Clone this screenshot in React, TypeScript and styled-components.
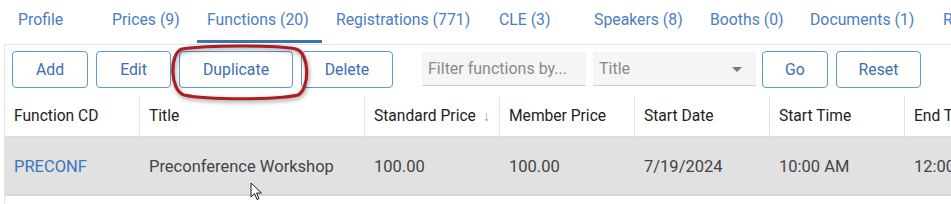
import styled, { createGlobalStyle } from 'styled-components';

const GlobalStyle = createGlobalStyle`
  html, body {
    margin: 0;
    padding: 0;
    background: #fff;
    overflow: hidden;
  }
  body {
    font-family: Roboto, 'Liberation Sans', sans-serif;
    font-size: 15.5px;
    color: #333;
  }
`;

const Page = styled.div`
  position: relative;
  width: 951px;
  height: 204px;
  overflow: hidden;
`;

const TabBar = styled.nav`
  display: flex;
  height: 44px;
  padding-left: 8px;
  box-sizing: border-box;
  white-space: nowrap;
`;

const Tab = styled.div<{ $width: number; $active?: boolean }>`
  position: relative;
  flex: 0 0 ${({ $width }) => $width}px;
  padding: 11px 0 0 10px;
  box-sizing: border-box;
  color: #4a7ec4;
  font-size: 15.8px;
  line-height: 18px;
  &::after {
    content: '';
    display: ${({ $active }) => ($active ? 'block' : 'none')};
    position: absolute;
    left: 0;
    right: 4px;
    bottom: 1px;
    height: 3px;
    background: #3a72b6;
  }
`;

const Card = styled.section`
  width: 1000px;
  margin-left: 4px;
  border-top: 1px solid #e3e3e3;
  border-left: 1px solid #e3e3e3;
  height: 200px;
`;

const Toolbar = styled.div`
  display: flex;
  align-items: flex-start;
  padding: 6px 0 0 7px;
  height: 51px;
  box-sizing: border-box;
`;

const Button = styled.button<{ $width: number; $gapAfter?: number }>`
  width: ${({ $width }) => $width}px;
  height: 37px;
  margin-right: ${({ $gapAfter }) => $gapAfter ?? 8}px;
  background: #fff;
  border: 1px solid #5a9ad8;
  border-radius: 4px;
  color: #3d6db3;
  font-family: Roboto, 'Liberation Sans', sans-serif;
  font-size: 15.8px;
  padding: 0;
`;

const FilterBox = styled.div<{ $width: number; $gapAfter: number }>`
  display: flex;
  align-items: center;
  justify-content: space-between;
  width: ${({ $width }) => $width}px;
  height: 34px;
  margin: 1px ${({ $gapAfter }) => $gapAfter}px 0 0;
  padding: 0 14px 0 6px;
  box-sizing: border-box;
  background: #f5f5f5;
  border-bottom: 1px solid #cfcfcf;
  color: #8a8a8a;
  font-size: 16px;
`;

const Caret = styled.span`
  width: 0;
  height: 0;
  border-left: 5px solid transparent;
  border-right: 5px solid transparent;
  border-top: 5px solid #7a7a7a;
  margin-top: 2px;
`;

const Grid = styled.div`
  display: grid;
  grid-template-columns: 135px 225px 135px 135px 135px 135px 135px;
`;

const HeadCell = styled.div<{ $last?: boolean }>`
  display: flex;
  align-items: center;
  justify-content: space-between;
  height: 40px;
  padding: 0 9px 0 9px;
  border-right: ${({ $last }) => ($last ? 'none' : '1px solid #e3e3e3')};
  border-bottom: 2px solid #dcdcdc;
  color: #222;
  font-size: 15.6px;
  white-space: nowrap;
  overflow: hidden;
`;

const SortArrow = styled.span`
  color: #9a9a9a;
  font-size: 14px;
`;

const Cell = styled.div<{ $link?: boolean }>`
  display: flex;
  align-items: center;
  height: 56px;
  padding: 0 9px;
  background: #e1e1e1;
  border-bottom: 2px solid #d6d6d6;
  color: ${({ $link }) => ($link ? '#3b76c0' : '#444')};
  font-size: 16.5px;
  white-space: nowrap;
  overflow: hidden;
`;

const Highlight = styled.svg`
  position: absolute;
  left: 167px;
  top: 43px;
  pointer-events: none;
  filter: drop-shadow(1px 2px 2px rgba(0, 0, 0, 0.4));
`;

const Pointer = styled.svg`
  position: absolute;
  left: 250px;
  top: 182px;
`;

const tabs = [
  { label: 'Profile', width: 94 },
  { label: 'Prices (9)', width: 95 },
  { label: 'Functions (20)', width: 129, active: true },
  { label: 'Registrations (771)', width: 163 },
  { label: 'CLE (3)', width: 95 },
  { label: 'Speakers (8)', width: 116 },
  { label: 'Booths (0)', width: 100 },
  { label: 'Documents (1)', width: 133 },
  { label: 'Reports', width: 100 },
];

const columns = [
  'Function CD',
  'Title',
  'Standard Price',
  'Member Price',
  'Start Date',
  'Start Time',
  'End Time',
];

const row = ['PRECONF', 'Preconference Workshop', '100.00', '100.00', '7/19/2024', '10:00 AM', '12:00 PM'];

export default function App() {
  return (
    <Page>
      <GlobalStyle />
      <TabBar>
        {tabs.map((t) => (
          <Tab key={t.label} $width={t.width} $active={t.active}>
            {t.label}
          </Tab>
        ))}
      </TabBar>
      <Card>
        <Toolbar>
          <Button $width={76}>Add</Button>
          <Button $width={75}>Edit</Button>
          <Button $width={114}>Duplicate</Button>
          <Button $width={92} $gapAfter={29}>Delete</Button>
          <FilterBox $width={164} $gapAfter={7}>Filter functions by...</FilterBox>
          <FilterBox $width={163} $gapAfter={6}>
            Title
            <Caret />
          </FilterBox>
          <Button $width={66}>Go</Button>
          <Button $width={85}>Reset</Button>
        </Toolbar>
        <Grid>
          {columns.map((c, i) => (
            <HeadCell key={c} $last={i === columns.length - 1}>
              <span>{c}</span>
              {c === 'Standard Price' && <SortArrow>↓</SortArrow>}
            </HeadCell>
          ))}
          {row.map((v, i) => (
            <Cell key={i} $link={i === 0}>
              {v}
            </Cell>
          ))}
        </Grid>
      </Card>
      <Highlight width="145" height="60" viewBox="0 0 145 60">
        <path
          d="M15 6 C 40 2, 112 2, 129 6 C 143 10, 143 46, 131 52 C 110 57, 40 57, 17 52 C 3 48, 2 10, 15 6 Z"
          fill="none"
          stroke="#ad1d21"
          strokeWidth="3.2"
        />
      </Highlight>
      <Pointer width="14" height="20" viewBox="0 0 14 20">
        <path d="M1 1 L1 15 L4.5 11.5 L7 17.5 L9 16.7 L6.6 11 L11.5 11 Z" fill="#fff" stroke="#222" strokeWidth="1" />
      </Pointer>
    </Page>
  );
}
